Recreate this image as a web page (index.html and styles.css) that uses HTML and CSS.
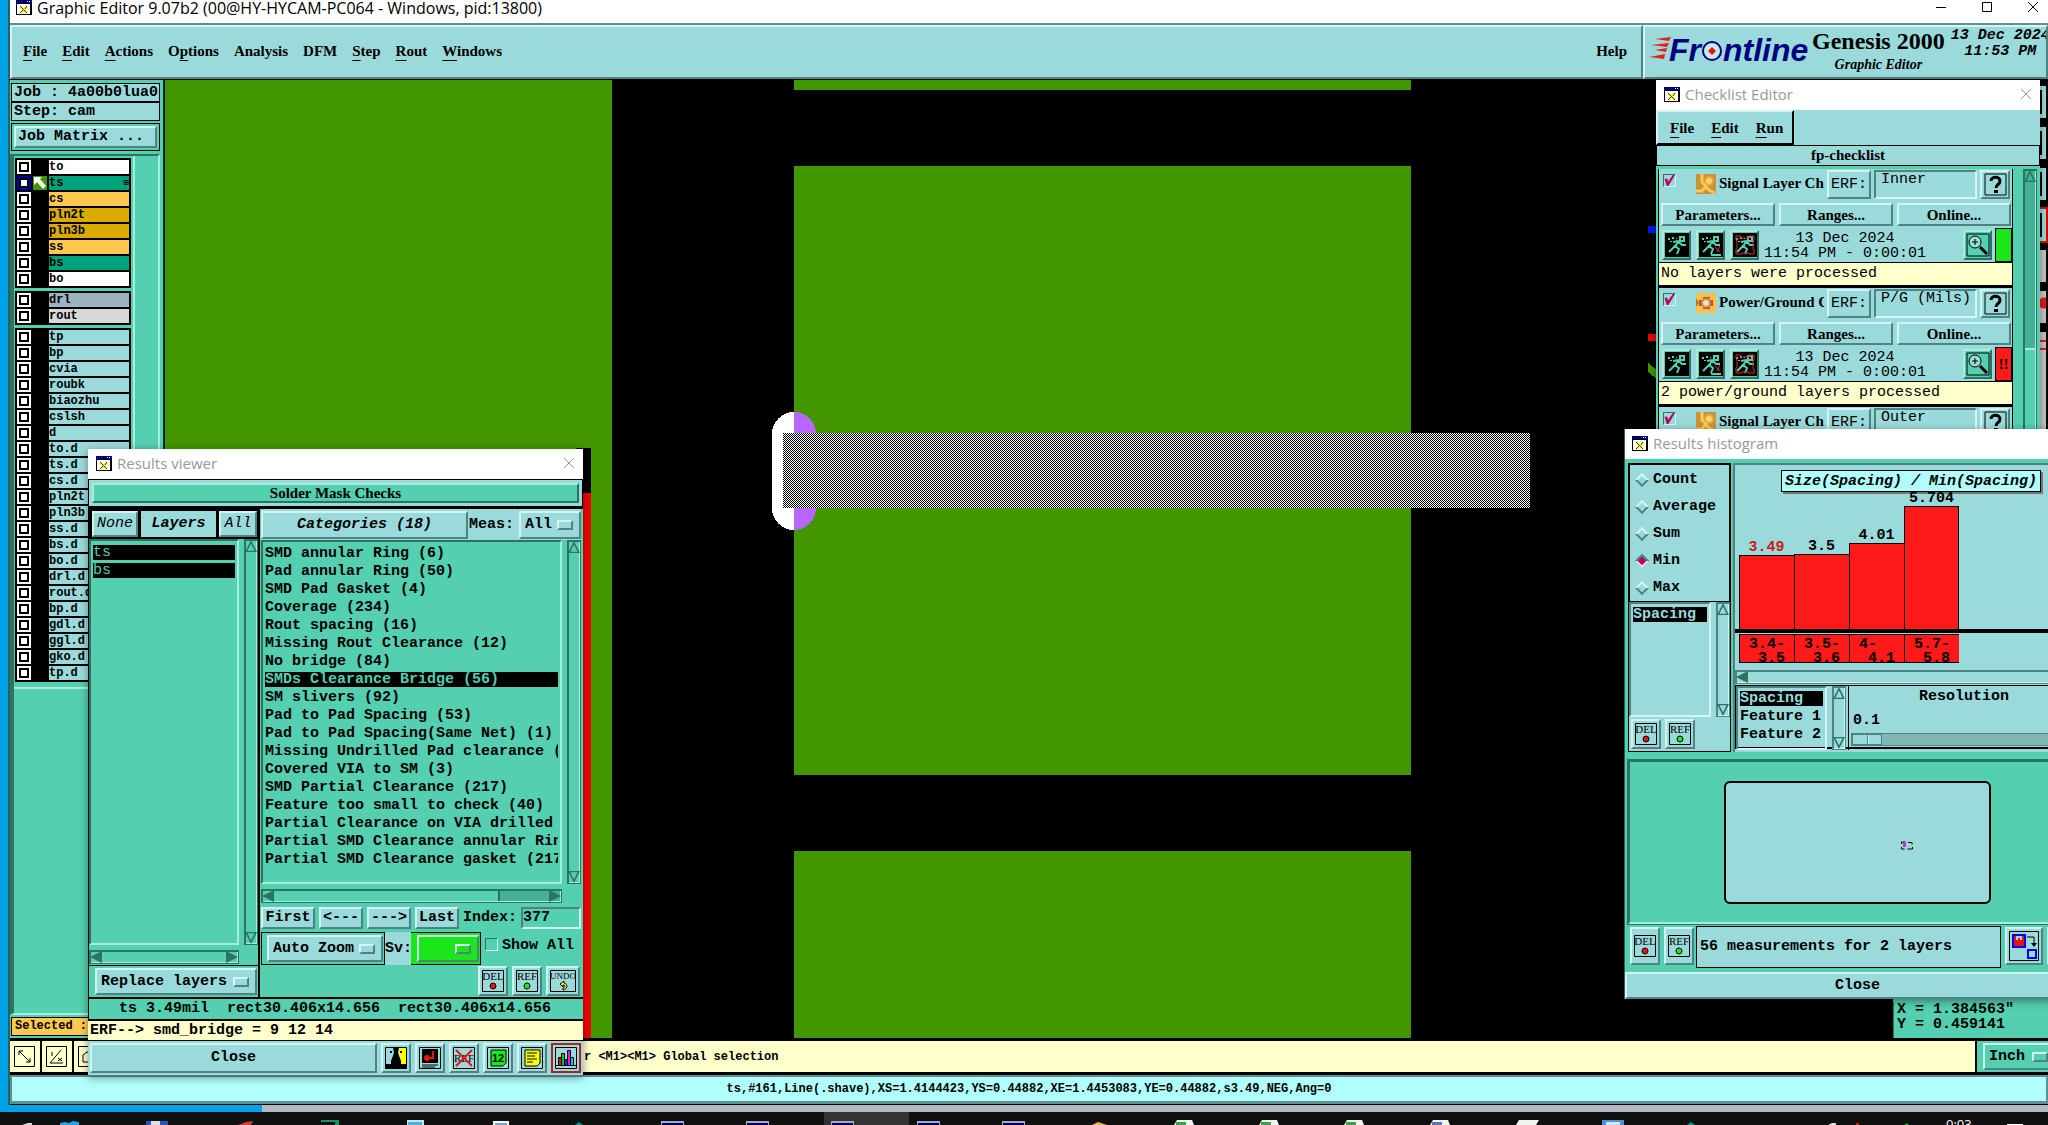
FILE: index.html
```html
<!DOCTYPE html>
<html lang="en">

<head>
    <meta charset="UTF-8">
    <meta name="viewport" content="width=device-width, initial-scale=1.0">
    <title>Graphic Editor</title>
    <link rel="stylesheet" href="styles.css">
</head>

<body>
    <!-- Shared icons -->
    <svg class="defs" aria-hidden="true">
        <symbol id="i-xwin" viewBox="0 0 16 15">
            <path d="M0 0h16v15H0z" fill="#000" />
            <path d="M1 4h13v10H1z" fill="#fff" />
            <path d="M0 0h16v3H0z" fill="#000080" />
            <path d="M11 1h1v1h-1zM13 1h1v1h-1z" fill="#fff" />
            <path d="M4 6l7 7M11 6l-6 7" stroke="#ff0" stroke-width="2" />
            <path d="M4 6l7 7M11 6l-2 3M7 10l-3 3" stroke="#333" fill="none" />
        </symbol>
        <symbol id="i-x" viewBox="0 0 12 12">
            <path d="M1 1l10 10M11 1L1 11" stroke="currentColor" fill="none" />
        </symbol>
        <symbol id="i-del" viewBox="0 0 22 22">
            <path d="M.5.5h21v21H.5z" fill="none" stroke="#000" />
            <text x="11" y="10" text-anchor="middle">DEL</text>
            <circle cx="11" cy="16" r="3" fill="#e11" stroke="#000" />
        </symbol>
        <symbol id="i-ref" viewBox="0 0 22 22">
            <path d="M.5.5h21v21H.5z" fill="none" stroke="#000" />
            <text x="11" y="10" text-anchor="middle">REF</text>
            <circle cx="11" cy="16" r="3" fill="#1e1" stroke="#000" />
        </symbol>
        <symbol id="i-undo" viewBox="0 0 26 22">
            <path d="M.5.5h25v21H.5z" fill="none" stroke="#000" />
            <text class="tight" x="13" y="9" text-anchor="middle">UNDO</text>
            <path d="M10 14l4-3v2c4 1 4 6-1 7v-2c3-1 2-3 0-3v2z" fill="#fe2" stroke="#000" />
        </symbol>
        <symbol id="i-help" viewBox="0 0 23 23">
            <path d="M1 1h21v21H1z" fill="none" stroke="#000" stroke-width="1" />
            <path d="M7 8c0-5 9-5 9 0 0 4-4 3-4 7" fill="none" stroke="#000" stroke-width="3" />
            <path d="M10 17h4v3h-4z" />
        </symbol>
        <symbol id="i-run" viewBox="0 0 24 24">
            <path d="M0 0h24v24H0z" />
            <path d="M15 4h4v4h-4zM14 8l-4 5 4 3-2 5M10 13l-6 6M8 9l5-1 4 4h4M12 12l-3 1" fill="none" stroke="#54cfaf" stroke-width="2" />
            <path d="M3 5h2v2H3zM7 4h2v2H7zM5 8h2v1H5zM11 5h1v1h-1z" fill="#54cfaf" />
        </symbol>
        <symbol id="i-run-fix" viewBox="0 0 24 24">
            <use href="#i-run" />
            <path d="M12 22h10" stroke="#54cfaf" stroke-width="2" />
            <path d="M16 14l5 5M21 13l-3 6" stroke="#e22" stroke-width="1" />
        </symbol>
        <symbol id="i-run-win" viewBox="0 0 24 24">
            <use href="#i-run" />
            <path d="M3 6V3h5v2h8V3h5v5l-1 1v7l1 1v4h-5v-1H9v1H3v-5l1-1V9z" fill="none" stroke="#e22" />
        </symbol>
        <symbol id="i-zoom" viewBox="0 0 24 24">
            <path d="M1 1h22v22H1z" fill="none" stroke="#000" />
            <circle cx="9" cy="9" r="6" fill="#9bdada" stroke="#000" />
            <path d="M9 6v6M6 9h6" stroke="#000" />
            <path d="M14 14l7 7" stroke="#000" stroke-width="3" />
        </symbol>
        <symbol id="i-signal" viewBox="0 0 20 20">
            <path d="M0 0h20v20H0z" fill="#c9933a" />
            <path d="M6 0v8l4 4-4 5H0M9 12l4 4 6 3" fill="none" stroke="#ffc850" stroke-width="3" />
            <circle cx="13" cy="7" r="4" fill="#ffd27a" stroke="#e8a93c" stroke-width="2" />
        </symbol>
        <symbol id="i-power" viewBox="0 0 20 20">
            <path d="M0 0h20v20H0z" fill="#ffc04a" />
            <path d="M7 4h7v2H7zM7 14h7v2H7zM3 7h3v6H3zM14 7h3v6h-3z" fill="#e0402c" />
            <circle cx="10" cy="10" r="4" fill="#ffe0a0" stroke="#a9986a" stroke-width="2" />
            <path d="M0 5l3 5-3 4z" fill="#a97c2c" />
        </symbol>
    </svg>

    <div class="desktop">
        <div class="app">
            <header class="titlebar">
                <svg width="16" height="15"><use href="#i-xwin" /></svg>
                <h1>Graphic Editor 9.07b2 (00@HY-HYCAM-PC064 - Windows, pid:13800)</h1>
                <div class="wincontrols">
                    <button aria-label="Minimize"><svg width="12" height="12"><path d="M1 6.500h10" stroke="#000" /></svg></button>
                    <button aria-label="Maximize"><svg width="12" height="12"><path d="M1.500 1.500h9v9h-9z" fill="none" stroke="#000" /></svg></button>
                    <button aria-label="Close"><svg width="12" height="12"><use href="#i-x" /></svg></button>
                </div>
            </header>

            <div class="menurow">
                <nav class="menubar bevel">
                    <button><u>F</u>ile</button>
                    <button><u>E</u>dit</button>
                    <button><u>A</u>ctions</button>
                    <button>O<u>p</u>tions</button>
                    <button>Analysis</button>
                    <button>DFM</button>
                    <button><u>S</u>tep</button>
                    <button><u>R</u>out</button>
                    <button><u>W</u>indows</button>
                    <button class="help">Help</button>
                </nav>
                <div class="brand bevel">
                    <svg class="logo" width="162" height="32" role="img" aria-label="Frontline">
                        <path d="M22 2L6 4l14 2zM20 8L2 10l16 2zM18 13L6 15l11 2zM16 19L0 22l15 2z" fill="#e8201c" />
                        <text x="20" y="26">Fr</text>
                        <text x="74" y="26">ntline</text>
                        <circle cx="63" cy="16" r="9" fill="#c4ecec" stroke="#000080" stroke-width="2" />
                        <path d="M63 12l4 4-4 4-4-4z" fill="#e11" />
                    </svg>
                    <div class="product">
                        <strong>Genesis 2000</strong>
                        <em>Graphic Editor</em>
                    </div>
                    <div class="clock">13 Dec 2024<br>11:53 PM</div>
                </div>
            </div>

            <main class="workspace">
                <aside class="sidebar">
                    <div class="jobinfo">Job : 4a00b0lua0</div>
                    <div class="jobinfo">Step: cam</div>
                    <div class="jobmatrix"><button class="btn">Job Matrix ...</button></div>
                    <div class="layerpane">
                        <div class="layers">
                            <div class="group">
                                <label class="layer"><input type="checkbox"><i></i><span class="white">to</span></label>
                                <label class="layer active"><input type="checkbox"><i><svg width="14" height="14"><path d="M1 1h8L7 3l6 7-3 3-6-7-3 3z" fill="#fff" /></svg></i><span class="mask">ts<b>⊞</b></span></label>
                                <label class="layer"><input type="checkbox"><i></i><span class="signal">cs</span></label>
                                <label class="layer"><input type="checkbox"><i></i><span class="plane">pln2t</span></label>
                                <label class="layer"><input type="checkbox"><i></i><span class="plane">pln3b</span></label>
                                <label class="layer"><input type="checkbox"><i></i><span class="signal">ss</span></label>
                                <label class="layer"><input type="checkbox"><i></i><span class="mask">bs</span></label>
                                <label class="layer"><input type="checkbox"><i></i><span class="white">bo</span></label>
                            </div>
                            <div class="group">
                                <label class="layer"><input type="checkbox"><i></i><span class="drill">drl</span></label>
                                <label class="layer"><input type="checkbox"><i></i><span class="rout">rout</span></label>
                            </div>
                            <div class="group">
                                <label class="layer"><input type="checkbox"><i></i><span>tp</span></label>
                                <label class="layer"><input type="checkbox"><i></i><span>bp</span></label>
                                <label class="layer"><input type="checkbox"><i></i><span>cvia</span></label>
                                <label class="layer"><input type="checkbox"><i></i><span>roubk</span></label>
                                <label class="layer"><input type="checkbox"><i></i><span>biaozhu</span></label>
                                <label class="layer"><input type="checkbox"><i></i><span>cslsh</span></label>
                                <label class="layer"><input type="checkbox"><i></i><span>d</span></label>
                                <label class="layer"><input type="checkbox"><i></i><span>to.d</span></label>
                                <label class="layer"><input type="checkbox"><i></i><span>ts.d</span></label>
                                <label class="layer"><input type="checkbox"><i></i><span>cs.d</span></label>
                                <label class="layer"><input type="checkbox"><i></i><span>pln2t</span></label>
                                <label class="layer"><input type="checkbox"><i></i><span>pln3b</span></label>
                                <label class="layer"><input type="checkbox"><i></i><span>ss.d</span></label>
                                <label class="layer"><input type="checkbox"><i></i><span>bs.d</span></label>
                                <label class="layer"><input type="checkbox"><i></i><span>bo.d</span></label>
                                <label class="layer"><input type="checkbox"><i></i><span>drl.d</span></label>
                                <label class="layer"><input type="checkbox"><i></i><span>rout.d</span></label>
                                <label class="layer"><input type="checkbox"><i></i><span>bp.d</span></label>
                                <label class="layer"><input type="checkbox"><i></i><span>gdl.d</span></label>
                                <label class="layer"><input type="checkbox"><i></i><span>ggl.d</span></label>
                                <label class="layer"><input type="checkbox"><i></i><span>gko.d</span></label>
                                <label class="layer"><input type="checkbox"><i></i><span>tp.d</span></label>
                            </div>
                        </div>
                    </div>
                    <div class="selected">Selected :</div>
                </aside>

                <!-- Board view -->
                <svg class="board">
                    <defs>
                        <pattern id="hatch" width="2" height="2" patternUnits="userSpaceOnUse">
                            <path d="M0 0h2v2H0z" fill="#000" />
                            <path d="M0 0h1v1H0zM1 1h1v1H1z" fill="#fff" />
                        </pattern>
                    </defs>
                    <g fill="#429600">
                        <path d="M0 0h447v960H0z" />
                        <path d="M629 0h617v10H629zM629 86h617v609H629zM629 771h617v189H629z" />
                        <path d="M1483 283l9 7v9l-9-7z" />
                    </g>
                    <path d="M411 368h15v46h-15z" fill="#000" />
                    <path d="M411 413h15v547h-15z" fill="#f00000" />
                    <path d="M1483 146h9v7h-9z" fill="#0018f0" />
                    <path d="M1483 254h9v7h-9z" fill="#f00000" />
                    <rect x="607" y="332" width="44" height="118" rx="22" ry="22" fill="#b966ff" />
                    <path d="M629 332c-12 0-22 10-22 22v74c0 12 10 22 22 22z" fill="#fff" />
                    <rect x="618" y="353" width="747" height="75" fill="url(#hatch)" />
                </svg>

                <aside class="rightbar">
                    <div class="tools">
                        <button class="tool"></button>
                        <button class="tool"></button>
                        <button class="tool"></button>
                        <button class="tool on"></button>
                        <button class="tool gray"></button>
                        <button class="tool gray dot"></button>
                        <button class="tool gray bars"></button>
                        <button class="tool gray blue"></button>
                        <button class="tool gray bars"></button>
                    </div>
                    <div class="coords">X = 1.384563"<br>Y = 0.459141</div>
                </aside>
            </main>

            <div class="prompt">
                <button class="promptbtn" aria-label="Measure"><svg width="22" height="22"><path d="M.5.5h20v20H.5zM5 5l11 11M5 9V5h4M12 16h4v-4" fill="none" stroke="#000" /></svg></button>
                <button class="promptbtn" aria-label="Angle"><svg width="22" height="22"><path d="M.5.5h20v20H.5zM4 17L15 4M4 17h13M6 6v4M12 12l4 3M16 12l-4 3" fill="none" stroke="#000" /></svg></button>
                <button class="promptbtn" aria-label="Profile"><svg width="22" height="22"><path d="M.5.5h20v20H.5zM5 16V9l4-3h8v10z" fill="none" stroke="#000" /></svg></button>
                <p>r &lt;M1&gt;&lt;M1&gt; Global selection</p>
                <div class="units"><span class="opt"><select aria-label="Units"><option>Inch</option></select></span></div>
            </div>
            <footer class="status"><span>ts,#161,Line(.shave),XS=1.4144423,YS=0.44882,XE=1.4453083,YE=0.44882,s3.49,NEG,Ang=0</span></footer>
        </div>

        <!-- Results viewer -->
        <section class="window results">
            <header class="titlebar small">
                <svg width="16" height="15"><use href="#i-xwin" /></svg>
                <h2>Results viewer</h2>
                <button aria-label="Close window"><svg width="12" height="12"><use href="#i-x" /></svg></button>
            </header>
            <div class="checkname"><span>Solder Mask Checks</span></div>
            <div class="columns">
                <div class="leftcol">
                    <div class="layerhead">
                        <button class="btn">None</button>
                        <strong>Layers</strong>
                        <button class="btn">All</button>
                    </div>
                    <div class="scrolled">
                        <ul class="list">
                            <li class="sel">ts</li>
                            <li class="sel">bs</li>
                        </ul>
                        <div class="vbar"></div>
                        <div class="hbar"></div>
                    </div>
                    <div class="replace"><span class="opt"><select aria-label="Layer display"><option>Replace layers</option></select></span></div>
                </div>
                <div class="rightcol">
                    <div class="cathead">
                        <button class="btn">Categories (18)</button>
                        <label for="meas">Meas:</label>
                        <span class="opt"><select id="meas"><option>All</option></select></span>
                    </div>
                    <div class="scrolled">
                        <ul class="list">
                            <li>SMD annular Ring (6)</li>
                            <li>Pad annular Ring (50)</li>
                            <li>SMD Pad Gasket (4)</li>
                            <li>Coverage (234)</li>
                            <li>Rout spacing (16)</li>
                            <li>Missing Rout Clearance (12)</li>
                            <li>No bridge (84)</li>
                            <li class="sel">SMDs Clearance Bridge (56)</li>
                            <li>SM slivers (92)</li>
                            <li>Pad to Pad Spacing (53)</li>
                            <li>Pad to Pad Spacing(Same Net) (1)</li>
                            <li>Missing Undrilled Pad clearance (</li>
                            <li>Covered VIA to SM (3)</li>
                            <li>SMD Partial Clearance (217)</li>
                            <li>Feature too small to check (40)</li>
                            <li>Partial Clearance on VIA drilled</li>
                            <li>Partial SMD Clearance annular Rin</li>
                            <li>Partial SMD Clearance gasket (217</li>
                        </ul>
                        <div class="vbar"></div>
                        <div class="hbar part"></div>
                    </div>
                    <div class="navrow">
                        <button class="btn">First</button>
                        <button class="btn">&lt;---</button>
                        <button class="btn">---&gt;</button>
                        <button class="btn">Last</button>
                        <label for="index">Index:</label>
                        <input class="field" id="index" type="text" value="377">
                    </div>
                    <div class="zoomrow">
                        <div class="autozoom"><span class="opt"><select aria-label="Zoom mode"><option>Auto Zoom</option></select></span></div>
                        <label class="sv" for="sev">Sv:</label>
                        <div class="severity"><span class="opt"><select id="sev"><option></option></select></span></div>
                        <label class="showall"><input type="checkbox">Show All</label>
                    </div>
                    <div class="actions">
                        <button class="btn icon"><svg width="22" height="22"><use href="#i-del" /></svg></button>
                        <button class="btn icon"><svg width="22" height="22"><use href="#i-ref" /></svg></button>
                        <button class="btn icon undo"><svg width="26" height="22"><use href="#i-undo" /></svg></button>
                    </div>
                </div>
            </div>
            <div class="measure">ts 3.49mil&nbsp; rect30.406x14.656&nbsp; rect30.406x14.656</div>
            <div class="erf">ERF--&gt; smd_bridge = 9 12 14</div>
            <div class="closebar">
                <button class="btn close">Close</button>
                <button class="btn icon" aria-label="Contrast"><svg width="22" height="22"><path d="M0 0h22v22H0z" fill="#9bdada" /><path d="M14 0h8v17h-8z" fill="#ff0" /><path d="M8 0h6l-1 6 3 8v3h6v5H0v-5h6v-3l3-8zM5 4h2v2H5zM15 4h2v2h-2z" /><path d="M.5.5h21v21H.5z" fill="none" stroke="#000" /></svg></button>
                <button class="btn icon" aria-label="Snapshot"><svg width="22" height="22"><path d="M.5.5h21v21H.5z" fill="#9bdada" stroke="#000" /><path d="M3 2h16v14H3z" /><circle cx="8" cy="11" r="3" fill="#e11" /><path d="M11 11h3V4" stroke="#e11" stroke-width="2" fill="none" /><path d="M3 18h16M3 20h13" stroke="#000" /></svg></button>
                <button class="btn icon" aria-label="Clear reference"><svg width="22" height="22"><path d="M.5.5h21v21H.5z" fill="none" stroke="#000" /><text x="11" y="15" text-anchor="middle">REF</text><path d="M3 3l16 16M19 3L3 19" stroke="#e11" stroke-width="2" /></svg></button>
                <button class="btn icon" aria-label="Numbers"><svg width="22" height="22"><path d="M.5.5h21v21H.5z" fill="none" stroke="#000" /><path d="M4 3h15v13l-3 3H4z" fill="#1e1" stroke="#000" /><text class="num" x="11" y="15" text-anchor="middle">12</text></svg></button>
                <button class="btn icon" aria-label="Notes"><svg width="22" height="22"><path d="M.5.5h21v21H.5z" fill="none" stroke="#000" /><path d="M4 3h15v13l-3 3H4z" fill="#ff0" stroke="#000" /><path d="M6 6h10M6 9h8M6 12h10M6 15h6" stroke="#000" /></svg></button>
                <button class="btn icon hist" aria-label="Histogram"><svg width="22" height="22"><path d="M.5.5h21v21H.5z" fill="#9bdada" stroke="#000" /><g stroke="#000"><path d="M3.500 10.500h3v8h-3z" fill="#e11" /><path d="M6.500 6.500h3v12h-3z" fill="#1c1" /><path d="M9.500 12.500h3v6h-3z" fill="#22e" /><path d="M12.500 3.500h3v15h-3z" fill="#e1e" /><path d="M15.500 10.500h3v8h-3z" fill="#1cc" /><path d="M1 18.500h20" /></g></svg></button>
            </div>
        </section>

        <!-- Checklist editor -->
        <section class="window checklist">
            <header class="titlebar small">
                <svg width="16" height="15"><use href="#i-xwin" /></svg>
                <h2>Checklist Editor</h2>
                <button aria-label="Close window"><svg width="12" height="12"><use href="#i-x" /></svg></button>
            </header>
            <nav class="submenu">
                <button><u>F</u>ile</button>
                <button><u>E</u>dit</button>
                <button><u>R</u>un</button>
            </nav>
            <div class="listname">fp-checklist</div>
            <div class="checks">
                <div class="items">
                    <article class="check">
                        <div class="checkhead">
                            <input type="checkbox" checked aria-label="Signal Layer Checks, inner">
                            <svg width="20" height="20"><use href="#i-signal" /></svg>
                            <h3>Signal Layer Ch</h3>
                            <button class="btn">ERF:</button>
                            <input class="field" type="text" value="Inner" aria-label="ERF model">
                            <button class="btn icon" aria-label="Help"><svg width="23" height="23"><use href="#i-help" /></svg></button>
                        </div>
                        <div class="checkbtns">
                            <button class="btn">Parameters...</button>
                            <button class="btn">Ranges...</button>
                            <button class="btn">Online...</button>
                        </div>
                        <div class="checkrun">
                            <button class="btn teal icon"><svg width="24" height="24"><use href="#i-run" /></svg></button>
                            <button class="btn teal icon"><svg width="24" height="24"><use href="#i-run-fix" /></svg></button>
                            <button class="btn teal icon"><svg width="24" height="24"><use href="#i-run-win" /></svg></button>
                            <p>13 Dec 2024<br>11:54 PM - 0:00:01</p>
                            <button class="btn teal icon"><svg width="24" height="24"><use href="#i-zoom" /></svg></button>
                            <span class="light ok"></span>
                        </div>
                        <div class="checkmsg">No layers were processed</div>
                    </article>
                    <article class="check">
                        <div class="checkhead">
                            <input type="checkbox" checked aria-label="Power/Ground Checks">
                            <svg width="20" height="20"><use href="#i-power" /></svg>
                            <h3>Power/Ground C</h3>
                            <button class="btn">ERF:</button>
                            <input class="field" type="text" value="P/G (Mils)" aria-label="ERF model">
                            <button class="btn icon" aria-label="Help"><svg width="23" height="23"><use href="#i-help" /></svg></button>
                        </div>
                        <div class="checkbtns">
                            <button class="btn">Parameters...</button>
                            <button class="btn">Ranges...</button>
                            <button class="btn">Online...</button>
                        </div>
                        <div class="checkrun">
                            <button class="btn teal icon"><svg width="24" height="24"><use href="#i-run" /></svg></button>
                            <button class="btn teal icon"><svg width="24" height="24"><use href="#i-run-fix" /></svg></button>
                            <button class="btn teal icon"><svg width="24" height="24"><use href="#i-run-win" /></svg></button>
                            <p>13 Dec 2024<br>11:54 PM - 0:00:01</p>
                            <button class="btn teal icon"><svg width="24" height="24"><use href="#i-zoom" /></svg></button>
                            <span class="light bad">!!</span>
                        </div>
                        <div class="checkmsg">2 power/ground layers processed</div>
                    </article>
                    <article class="check">
                        <div class="checkhead">
                            <input type="checkbox" checked aria-label="Signal Layer Checks, outer">
                            <svg width="20" height="20"><use href="#i-signal" /></svg>
                            <h3>Signal Layer Ch</h3>
                            <button class="btn">ERF:</button>
                            <input class="field" type="text" value="Outer" aria-label="ERF model">
                            <button class="btn icon" aria-label="Help"><svg width="23" height="23"><use href="#i-help" /></svg></button>
                        </div>
                    </article>
                </div>
                <div class="vbar"></div>
            </div>
        </section>

        <!-- Results histogram -->
        <section class="window histogram">
            <header class="titlebar small">
                <svg width="16" height="15"><use href="#i-xwin" /></svg>
                <h2>Results histogram</h2>
            </header>
            <div class="histtop">
                <div class="histleft">
                    <div class="radios">
                        <label><input type="radio" name="fn">Count</label>
                        <label><input type="radio" name="fn">Average</label>
                        <label><input type="radio" name="fn">Sum</label>
                        <label><input type="radio" name="fn" checked>Min</label>
                        <label><input type="radio" name="fn">Max</label>
                    </div>
                    <div class="scrolled light">
                        <ul class="list"><li class="sel">Spacing</li></ul>
                        <div class="vbar"></div>
                    </div>
                    <div class="actions">
                        <button class="btn icon"><svg width="22" height="22"><use href="#i-del" /></svg></button>
                        <button class="btn icon"><svg width="22" height="22"><use href="#i-ref" /></svg></button>
                    </div>
                </div>
                <div class="histright">
                    <div class="chart">
                        <div class="charttitle">Size(Spacing) / Min(Spacing)</div>
                        <div class="bars">
                            <div class="bar"><span class="low">3.49</span><i style="height: 74px"></i></div>
                            <div class="bar"><span>3.5</span><i style="height: 75px"></i></div>
                            <div class="bar"><span>4.01</span><i style="height: 86px"></i></div>
                            <div class="bar"><span>5.704</span><i style="height: 123px"></i></div>
                        </div>
                        <div class="ranges">
                            <span>3.4-<br>&nbsp;3.5</span>
                            <span>3.5-<br>&nbsp;3.6</span>
                            <span>4-<br>&nbsp;4.1</span>
                            <span>5.7-<br>&nbsp;5.8</span>
                        </div>
                    </div>
                    <div class="hbar"></div>
                    <div class="histopts">
                        <div class="scrolled light">
                            <ul class="list">
                                <li class="sel">Spacing</li>
                                <li>Feature 1</li>
                                <li>Feature 2</li>
                            </ul>
                            <div class="vbar"></div>
                        </div>
                        <div class="resolution">
                            <label for="res">Resolution</label>
                            <output>0.1</output>
                            <input id="res" type="range" min="0" max="10" value="0">
                        </div>
                    </div>
                </div>
            </div>
            <div class="preview">
                <svg width="267" height="123">
                    <rect x="1" y="1" width="265" height="121" rx="5" fill="#9bdada" stroke="#000" stroke-width="2" />
                    <path d="M177.500 63v-2h4M177.500 66v2h3M184 61.500h4v2M188.500 66v2h-5" fill="none" stroke="#000" />
                    <path d="M179 62h3v4h-3z" fill="#d2d" />
                </svg>
            </div>
            <div class="summary">
                <button class="btn icon"><svg width="22" height="22"><use href="#i-del" /></svg></button>
                <button class="btn icon"><svg width="22" height="22"><use href="#i-ref" /></svg></button>
                <div class="count">56 measurements for 2 layers</div>
                <button class="btn icon wide" aria-label="Send to list"><svg width="30" height="30"><path d="M.5.5h29v29H.5zM18 6h7v7" fill="none" stroke="#000" /><path d="M22 12h6l-3 4z" /><path d="M4 4h12v12H4zM19 19h8v8h-8z" fill="#9bdada" stroke="#00e" stroke-width="2" /><path d="M5 5h2v4h2V7h2v2h2V5h2v10H5z" fill="#e11" /></svg></button>
                <button class="btn icon wide" aria-label="Send all"></button>
            </div>
            <button class="btn close">Close</button>
        </section>

        <div class="strip"></div>
        <div class="taskbar">
            <svg class="tasks" width="2048" height="13">
                <path d="M824 0h85v13h-85z" fill="#333" />
                <path d="M22 13l6-2h4v2z" fill="#ddd" />
                <path d="M60 13v-2l5-1 4 1 4-2 6 1v3z" fill="#19a7f0" />
                <path d="M146 9h22v4h-22z" fill="#3050b8" /><path d="M151 9h9v4h-9z" fill="#dde" />
                <path d="M238 13l8-3 7-1-2 4z" fill="#d83a28" />
                <path d="M321 8h18v5h-4v-3h-14z" fill="#1c9060" />
                <path d="M407 8h17v5h-17z" fill="#bfe6f5" /><path d="M408 10h14v3h-14z" fill="#4ab0d8" />
                <path d="M493 9h16v4h-16z" fill="#f4f6fa" /><path d="M495 11h12v2h-12z" fill="#79a5c8" />
                <path d="M575 13l4-3 4 3z" fill="#0a9690" />
                <g fill="#aab"><path d="M661 9h23v4h-23zM746 9h23v4h-23zM831 9h23v4h-23zM917 9h23v4h-23zM1002 9h23v4h-23z" /></g>
                <g fill="#000060"><path d="M662 11h21v2h-21zM747 11h21v2h-21zM832 11h21v2h-21zM918 11h21v2h-21zM1003 11h21v2h-21z" /></g>
                <path d="M1092 13l6-3 9 3z" fill="#e8b64c" />
                <g fill="#eef6ee"><path d="M1177 8h15l2 5h-20zM1262 8h15l2 5h-20zM1347 8h15l2 5h-20zM1433 8h15l2 5h-20zM1519 8h20l-3 5h-20z" /></g>
                <g fill="#3aa04a"><path d="M1176 10h10v3h-10zM1261 10h10v3h-10zM1346 10h10v3h-10z" /></g>
                <path d="M1432 10h10v3h-10z" fill="#6670b8" />
                <path d="M1602 8h22v5h-22z" fill="#4f90d8" /><path d="M1606 10h14v3h-14z" fill="#d0e6f8" />
                <path d="M1687 13l4-3 4 3z" fill="#0a9690" />
                <path d="M1828 13l4-2h4v2z" fill="#ddd" /><path d="M1856 11h3v2h-3z" fill="#c22" /><path d="M1904 13l3-2 2 2z" fill="#1b2" />
                <path d="M2007 12h16v1h-16z" fill="#fff" />
            </svg>
            <time>0:03</time>
        </div>
    </div>
</body>

</html>
```

FILE: styles.css
```css
* {
    box-sizing: border-box;
}

body {
    margin: 0;
    overflow: hidden;
    font: bold 15px/18px "Liberation Mono", "Courier New", monospace;
    color: #000;
    background: #00a2e8;
}

h1, h2, h3, p, ul {
    margin: 0;
    padding: 0;
    font: inherit;
}

button, input, select {
    font: inherit;
    color: inherit;
    margin: 0;
    padding: 0;
    border: 0;
    background: none;
    appearance: none;
}

svg {
    display: block;
    flex: none;
}

svg text {
    font: 11px "Liberation Serif", serif;
}

svg text.tight {
    font-size: 9px;
}

svg text.num {
    font: bold 11px "Liberation Sans", sans-serif;
}

.defs {
    position: absolute;
    width: 0;
    height: 0;
}

.desktop {
    position: relative;
    display: flex;
    flex-direction: column;
    height: 100vh;
    overflow: hidden;
}

/* Raised and sunken controls */
.btn, .opt {
    background: #9bdada;
    border: 2px solid;
    border-color: #cff4f4 #4f8282 #4f8282 #cff4f4;
    white-space: nowrap;
}

.btn.teal {
    background: #54cfaf;
    border-color: #a6eedb #2a7561 #2a7561 #a6eedb;
}

.btn.icon {
    display: grid;
    place-items: center;
    width: 30px;
    height: 30px;
    flex: none;
}

.bevel {
    border: 2px solid;
    border-color: #d5f5f5 #4f8282 #4f8282 #d5f5f5;
}

.opt {
    display: flex;
    align-items: center;
    padding: 0 6px 0 4px;
}

.opt select {
    flex: 1;
    min-width: 0;
}

.opt::after {
    content: "";
    width: 12px;
    height: 6px;
    border: 2px solid;
    border-color: #d5f5f5 #4f8282 #4f8282 #d5f5f5;
}

.field {
    min-width: 0;
    border: 2px solid;
    border-color: #4f8282 #d5f5f5 #d5f5f5 #4f8282;
}

/* Main window */
.app {
    flex: 1;
    display: flex;
    flex-direction: column;
    min-height: 0;
    margin-left: 8px;
    border-left: 2px solid #2f5f5c;
    background: #54cfaf;
}

.titlebar {
    display: flex;
    align-items: flex-start;
    gap: 5px;
    height: 23px;
    padding: 0 6px;
    background: #fff;
    font: 16px/16px "Open Sans", "Noto Sans", sans-serif;
}

.titlebar h1 {
    flex: 1;
}

.wincontrols {
    display: flex;
    gap: 34px;
    padding: 1px 3px 0 0;
}

.titlebar.small {
    align-items: center;
    height: 30px;
    padding: 0 8px 2px;
    font-size: 15px;
    line-height: 20px;
    color: #999;
}

.titlebar.small h2 {
    flex: 1;
}

.menurow {
    display: flex;
    height: 57px;
    border-top: 2px solid #5f8f8f;
    border-bottom: 1px solid #000;
    font: bold 15px/16px "Liberation Serif", serif;
    background: #9bdada;
}

.menubar {
    flex: 1;
    display: flex;
    align-items: center;
    gap: 15px;
    padding: 0 14px 2px 11px;
}

.menubar u, .submenu u {
    text-underline-offset: 4px;
}

.help {
    margin-left: auto;
}

.brand {
    display: flex;
    width: 405px;
    padding: 0 4px;
    gap: 1px;
    overflow: hidden;
}

.logo {
    margin-top: 8px;
}

.logo text {
    font: italic bold 32px "Liberation Sans", sans-serif;
    fill: #000080;
}

.product {
    text-align: center;
    flex: none;
    font-size: 14px;
}

.product strong {
    display: block;
    font-size: 24px;
    line-height: 28px;
}

.product em {
    line-height: 20px;
}

.clock {
    flex: none;
    margin-left: 5px;
    padding-top: 1px;
    font: italic bold 15px/16px "Liberation Mono", monospace;
    text-align: center;
}

.workspace {
    flex: 1;
    display: grid;
    grid-template-columns: 155px 1fr 155px;
    min-height: 0;
}

.sidebar {
    display: flex;
    flex-direction: column;
    min-height: 0;
    padding: 3px 3px 2px 0;
    border-right: 2px solid #123;
}

.jobinfo {
    height: 19px;
    margin-left: 1px;
    padding-left: 2px;
    border: 1px solid #000;
    background: #9bdada;
    white-space: nowrap;
    line-height: 17px;
}

.jobmatrix {
    margin: 2px 0 3px 1px;
    padding: 2px;
    border: 1px solid #000;
}

.jobmatrix .btn {
    width: 100%;
    height: 22px;
    padding-left: 2px;
    text-align: left;
    line-height: 18px;
}

.layerpane {
    flex: 1;
    min-height: 0;
    border: 2px solid;
    border-color: #2a7561 #a6eedb #a6eedb #2a7561;
    border-left-width: 4px;
}

.layers {
    width: 121px;
    padding: 2px 2px 2px 1px;
    border-right: 2px solid #a6eedb;
    border-bottom: 2px solid #a6eedb;
    font-size: 12px;
}

.group {
    margin-bottom: 3px;
    padding: 1px;
    background: #000;
}

.layer {
    display: grid;
    grid-template-columns: 14px 14px 1fr;
    gap: 2px;
    height: 16px;
    padding: 1px;
    line-height: 14px;
}

.layer input {
    width: 14px;
    height: 14px;
    border: 2px solid #fff;
    background: #fff;
    box-shadow: inset 0 0 0 2px #000;
}

.layer span {
    display: flex;
    justify-content: space-between;
    background: #9bdada;
}

.layer.active input {
    border-color: #0000a0;
}

.layer.active i {
    background: #429600;
}

.layer b {
    font-size: 9px;
}

.layer .white {
    background: #fff;
}

.layer .mask {
    background: #00a27c;
}

.layer .signal {
    background: #ffc850;
}

.layer .plane {
    background: #dbab00;
}

.layer .drill {
    background: #9bb4c0;
}

.layer .rout {
    background: #d8d8d8;
}

.selected {
    height: 19px;
    margin: 2px 0 0 1px;
    padding-left: 3px;
    border: 1px solid #000;
    background: #ffc850;
    font-size: 12px;
    line-height: 17px;
}

.board {
    width: 100%;
    height: 100%;
    background: #000;
    shape-rendering: crispEdges;
}

.rightbar {
    display: flex;
    flex-direction: column;
    justify-content: space-between;
    align-items: stretch;
    min-height: 0;
    background: #54cfaf;
}

.tools {
    display: grid;
    gap: 5px;
    justify-content: end;
    padding-top: 4px;
    background: #000;
}

.tool {
    width: 40px;
    height: 36px;
    border: 2px solid #000;
    background: #9bdada;
    box-shadow: inset 0 0 0 4px #9bdada, inset 0 0 0 6px #000;
}

.tool.on {
    border-color: #d00;
}

.tool.gray {
    background: #c4c4c4;
    box-shadow: none;
}

.tool.dot {
    background: radial-gradient(circle at 34px 12px, #e11 5px, #c4c4c4 6px);
}

.tool.bars {
    background: linear-gradient(#c4c4c4 8px, #e11 8px 10px, #c4c4c4 10px 16px, #e11 16px 18px, #c4c4c4 18px);
}

.tool.blue {
    background: linear-gradient(#c4c4c4 16px, #11e 16px 28px, #c4c4c4 28px);
}

.coords {
    padding: 0 3px 6px;
    border-left: 1px solid #2a7561;
    line-height: 15px;
    white-space: nowrap;
}

.prompt {
    display: flex;
    height: 37px;
    border-top: 3px solid #000;
    border-bottom: 3px solid #000;
    background: #ffffcc;
    font-size: 12px;
}

.promptbtn {
    display: grid;
    place-items: center;
    width: 32px;
    border-right: 2px solid #000;
}

.prompt p {
    flex: 1;
    padding-left: 478px;
    line-height: 32px;
}

.units {
    width: 81px;
    margin-right: -8px;
    padding: 2px 0 2px 6px;
    border-left: 2px solid #000;
    background: #54cfaf;
    font-size: 15px;
}

.units .opt {
    height: 27px;
    background: #54cfaf;
}

.status {
    height: 30px;
    padding: 2px 2px 3px;
    border-bottom: 1px solid #000;
    background: #5f8f8f;
    font-size: 12px;
    line-height: 25px;
    text-align: center;
}

.status span {
    display: block;
    height: 24px;
    background: #b0fffc;
}

/* Floating windows */
.window {
    position: absolute;
    background: #54cfaf;
    box-shadow: 0 2px 8px rgba(0, 0, 0, 0.4);
}

.results {
    left: 88px;
    top: 449px;
    width: 495px;
}

.checkname {
    height: 28px;
    padding: 3px;
    border: 1px solid #000;
    background: #9bdada;
    text-align: center;
    font: bold 15px/16px "Liberation Serif", serif;
}

.checkname span {
    display: block;
    background: #54cfaf;
    border: 2px solid;
    border-color: #a6eedb #2a7561 #2a7561 #a6eedb;
}

.columns {
    display: grid;
    grid-template-columns: 172px 1fr;
    border-top: 2px solid #000;
    border-bottom: 2px solid #000;
}

.leftcol {
    border-right: 2px solid #000;
    border-left: 1px solid #000;
}

.layerhead {
    display: grid;
    grid-template-columns: 46px 1fr 38px;
    gap: 3px;
    height: 30px;
    padding: 2px 1px 2px 3px;
    background: #000;
    font-style: italic;
    text-align: center;
}

.layerhead .btn {
    font-weight: normal;
}

.layerhead strong {
    background: #9bdada;
    line-height: 26px;
}

.list {
    grid-area: 1 / 1;
    overflow: hidden;
    list-style: none;
    padding: 4px 2px;
    border: 2px solid;
    border-color: #2a7561 #a6eedb #a6eedb #2a7561;
}

.list li {
    height: 15px;
    margin-bottom: 3px;
    overflow: hidden;
    white-space: nowrap;
    line-height: 15px;
}

.list .sel {
    background: #000;
    color: #54cfaf;
}

.leftcol .sel {
    font-weight: normal;
}

.scrolled {
    display: grid;
    grid-template-columns: 1fr 14px;
    gap: 5px;
}

.vbar, .hbar {
    display: flex;
    justify-content: space-between;
    border: 1px solid #2a7561;
    background: #54cfaf;
    box-shadow: inset 1px 1px 0 #2a7561, inset -1px -1px 0 #a6eedb;
}

.vbar {
    flex-direction: column;
}

.hbar {
    height: 14px;
}

.vbar::before, .vbar::after, .hbar::before, .hbar::after {
    content: "";
    width: 12px;
    height: 12px;
    background: #2a7561;
}

.vbar::before {
    clip-path: polygon(50% 0, 100% 100%, 0 100%, 50% 0, 50% 30%, 20% 90%, 80% 90%, 50% 30%);
}

.vbar::after {
    clip-path: polygon(50% 100%, 100% 0, 0 0, 50% 100%, 50% 70%, 20% 10%, 80% 10%, 50% 70%);
}

.hbar::before {
    clip-path: polygon(0 50%, 100% 0, 100% 100%, 0 50%, 30% 50%, 90% 20%, 90% 80%, 30% 50%);
}

.hbar::after {
    clip-path: polygon(100% 50%, 0 0, 0 100%, 100% 50%, 70% 50%, 10% 20%, 10% 80%, 70% 50%);
}

.hbar.part {
    background: linear-gradient(90deg, #54cfaf 236px, #2a7561 236px 238px, #44b096 238px);
}

.leftcol .scrolled {
    grid-template-rows: 406px 14px;
    padding-bottom: 1px;
}

.replace {
    height: 32px;
    padding: 2px 1px 2px 6px;
    border-top: 1px solid #000;
}

.replace .opt {
    height: 27px;
}

.rightcol {
    padding: 0 2px 0 1px;
}

.cathead {
    display: grid;
    grid-template-columns: 207px 1fr 62px;
    height: 31px;
    padding: 2px 0 1px;
    background: #9bdada;
}

.cathead .btn {
    font-style: italic;
}

.cathead label {
    line-height: 28px;
    padding-left: 1px;
}

.rightcol .scrolled {
    grid-template-rows: 344px 14px;
}

.navrow {
    display: grid;
    grid-template-columns: 54px 44px 44px 44px 54px 1fr;
    gap: 4px;
    height: 22px;
    margin-top: 4px;
}

.navrow label {
    line-height: 22px;
}

.zoomrow {
    display: flex;
    height: 33px;
    margin-top: 3px;
}

.autozoom {
    width: 124px;
    padding: 2px 1px 2px 5px;
    border: 1px solid #000;
}

.autozoom .opt, .severity .opt {
    height: 27px;
}

.sv {
    width: 26px;
    background: #9bdada;
    line-height: 33px;
}

.severity {
    width: 70px;
    padding: 2px 1px 2px 6px;
    border: 1px solid #000;
    border-left: 0;
    background: #1be61b;
}

.severity .opt {
    background: #1be61b;
}

.showall {
    display: flex;
    gap: 4px;
    padding: 5px 0 0 4px;
    white-space: nowrap;
}

.showall input, .checkhead input[type="checkbox"] {
    width: 13px;
    height: 13px;
    margin-top: 1px;
    border: 1px solid;
    border-color: #2a7561 #d5f5f5 #d5f5f5 #2a7561;
}

.actions {
    display: flex;
    justify-content: flex-end;
    gap: 4px;
    padding: 1px;
}

.btn.icon.undo {
    width: 34px;
}

.measure {
    height: 20px;
    padding-left: 30px;
    line-height: 20px;
    border-left: 1px solid #000;
}

.erf {
    height: 22px;
    padding-left: 2px;
    border-top: 2px solid #000;
    border-bottom: 1px solid #000;
    background: #ffffcc;
    line-height: 20px;
}

.closebar {
    display: flex;
    gap: 4px;
    padding: 2px;
    border-bottom: 1px solid #4f8282;
    background: #9bdada;
}

.closebar .close {
    flex: 1;
}

.closebar .hist {
    border-color: #b02020;
}

/* Checklist editor */
.checklist {
    right: 8px;
    top: 80px;
    width: 384px;
    height: 400px;
    overflow: hidden;
    background: #9bdada;
}

.submenu {
    display: flex;
    gap: 17px;
    width: 138px;
    height: 35px;
    padding: 0 12px;
    border: 2px solid;
    border-color: #d5f5f5 #000 #000 #d5f5f5;
    font: bold 15px/16px "Liberation Serif", serif;
}

.listname {
    height: 21px;
    border: 1px solid #000;
    text-align: center;
    font: bold 15px/18px "Liberation Serif", serif;
}

.checks {
    display: grid;
    grid-template-columns: 1fr 14px;
    gap: 10px;
    height: 300px;
    padding: 3px 4px 0 2px;
    background: #54cfaf;
}

.items {
    border-left: 1px solid #000;
}

.check {
    height: 119px;
    background: #9bdada;
    border-right: 1px solid #000;
    border-bottom: 3px solid #000;
    font-weight: normal;
}

.checkhead {
    display: grid;
    grid-template-columns: 30px 20px 105px 44px 103px 29px;
    gap: 3px;
    padding: 1px 1px 0 4px;
}

.checkhead input[type="checkbox"] {
    margin-top: 4px;
}

.checkhead input:checked::before {
    content: "";
    display: block;
    width: 11px;
    height: 11px;
    background: #b8005c;
    clip-path: polygon(5% 35%, 30% 35%, 38% 60%, 80% 0, 100% 0, 40% 100%, 25% 100%);
}

.checkhead > svg {
    margin-top: 4px;
}

.checkhead h3 {
    overflow: hidden;
    white-space: nowrap;
    font: bold 15px/27px "Liberation Serif", serif;
}

.checkhead .field {
    height: 29px;
    padding: 0 0 10px 5px;
}

.checkhead .btn {
    height: 29px;
}

.checkbtns {
    display: grid;
    grid-template-columns: 1fr 1fr 1fr;
    gap: 4px;
    padding: 4px 1px 2px 2px;
}

.checkbtns .btn {
    height: 23px;
    font: bold 15px/18px "Liberation Serif", serif;
}

.checkrun {
    display: flex;
    gap: 5px;
    padding-left: 3px;
}

.checkrun .btn {
    width: 29px;
    margin-top: 2px;
}

.checkrun p {
    flex: 1;
    padding: 3px 32px 0 0;
    line-height: 15px;
    text-align: center;
    white-space: nowrap;
}

.light.ok, .light.bad {
    width: 17px;
    height: 34px;
    margin-left: -2px;
    border: 1px solid #000;
    background: #1be61b;
}

.light.bad {
    background: #ff1a1a;
    font: bold 15px/32px "Liberation Serif", serif;
    text-align: center;
}

.checkmsg {
    height: 23px;
    padding-left: 2px;
    border-top: 1px solid #000;
    background: #ffffcc;
    line-height: 22px;
}

.checks > .vbar {
    background: linear-gradient(#44b096 178px, #a6eedb 178px 180px, #54cfaf 180px);
}

/* Results histogram */
.histogram {
    right: -42px;
    top: 429px;
    width: 466px;
    border-left: 1px solid #2f5f5c;
}

.histogram .titlebar {
    padding-left: 7px;
}

.histtop {
    display: grid;
    grid-template-columns: 103px 1fr;
    gap: 2px;
    height: 289px;
    margin: 4px 3px 3px;
}

.histleft {
    border: 1px solid #000;
    background: #9bdada;
}

.radios {
    display: grid;
    grid-auto-rows: 27px;
    height: 138px;
    padding: 1px 0 0 5px;
    border: 1px solid #000;
}

.radios label {
    display: flex;
    align-items: center;
    gap: 6px;
}

.radios input {
    width: 10px;
    height: 10px;
    margin-left: 2px;
    transform: rotate(45deg);
    border: 2px solid;
    border-color: #d5f5f5 #4f8282 #4f8282 #d5f5f5;
}

.radios input:checked {
    background: #b8005c;
    border-color: #4f8282 #d5f5f5 #d5f5f5 #4f8282;
}

.light .list {
    border-color: #4f8282 #d5f5f5 #d5f5f5 #4f8282;
    padding: 3px 2px;
}

.light .sel {
    color: #9bdada;
}

.light .vbar, .histright .hbar {
    border-color: #4f8282;
    background: #9bdada;
    box-shadow: inset 1px 1px 0 #4f8282, inset -1px -1px 0 #d5f5f5;
}

.histleft .scrolled {
    height: 115px;
}

.histleft .actions {
    justify-content: flex-start;
    padding: 2px;
}

.histright {
    display: flex;
    flex-direction: column;
    min-width: 0;
    border-left: 2px solid #4f8282;
    background: #9bdada;
}

.chart {
    height: 207px;
    padding-top: 5px;
    border-top: 2px solid #4f8282;
}

.charttitle {
    width: 260px;
    height: 22px;
    margin-left: 46px;
    padding-left: 3px;
    border: 1px solid #000;
    background: #b0fffc;
    box-shadow: 2px 2px 0 #777;
    font-style: italic;
    line-height: 21px;
}

.bars, .ranges {
    display: flex;
    padding-left: 4px;
}

.bars {
    align-items: flex-end;
    height: 141px;
    border-bottom: 4px solid #000;
}

.bar {
    width: 55px;
    text-align: center;
    white-space: nowrap;
}

.bar i {
    display: block;
    border: 1px solid #000;
    border-width: 1px 0 0 1px;
    background: #ff1a1a;
}

.bar:last-child i {
    border-right-width: 1px;
}

.bar span {
    display: block;
    line-height: 14px;
}

.bar .low {
    color: #d01818;
}

.ranges span {
    width: 55px;
    height: 29px;
    margin-top: 1px;
    padding: 3px 0 0 9px;
    border: 1px solid #000;
    border-right: 0;
    background: #ff1a1a;
    line-height: 14px;
}

.histopts {
    display: grid;
    grid-template-columns: 110px 1fr;
    gap: 2px;
    height: 64px;
    margin-top: 1px;
    border: 1px solid #000;
    border-width: 1px 0 2px 1px;
}

.resolution {
    display: grid;
    padding: 2px 2px 0;
    border-left: 1px solid #000;
}

.resolution label {
    margin-right: 8px;
    text-align: center;
}

.resolution output {
    padding: 2px 0 0 2px;
}

.resolution input {
    width: 100%;
    height: 13px;
    border: 1px solid #4f8282;
    background: #82b5b5;
}

.resolution input::-webkit-slider-thumb {
    appearance: none;
    width: 30px;
    height: 11px;
    border: 1px solid #4f8282;
    background: linear-gradient(90deg, #9bdada 14px, #4f8282 14px 15px, #d5f5f5 15px 16px, #9bdada 16px);
}

.preview {
    display: grid;
    place-items: center;
    height: 164px;
    margin: 8px 3px 0;
    border: 2px solid;
    border-color: #2a7561 #a6eedb #a6eedb #2a7561;
    outline: 1px solid #2a7561;
}

.summary {
    display: flex;
    gap: 4px;
    padding: 3px 5px 5px;
}

.summary .btn.icon {
    height: 38px;
}

.summary .btn.wide {
    width: 38px;
}

.count {
    flex: 1;
    height: 42px;
    margin: -1px 0 -1px -2px;
    padding-left: 3px;
    border: 1px solid #000;
    background: #9bdada;
    line-height: 40px;
}

.histogram > .close {
    display: block;
    width: 100%;
    height: 27px;
}

/* Desktop edge and task bar */
.strip {
    height: 7px;
    margin-left: 262px;
    background: #b0b8c4;
}

.taskbar {
    display: flex;
    height: 13px;
    overflow: hidden;
    background: #101010;
    color: #fff;
    font: 13px/24px "Open Sans", sans-serif;
}

.tasks {
    margin-right: -102px;
}

.taskbar time {
    flex: none;
}
```
